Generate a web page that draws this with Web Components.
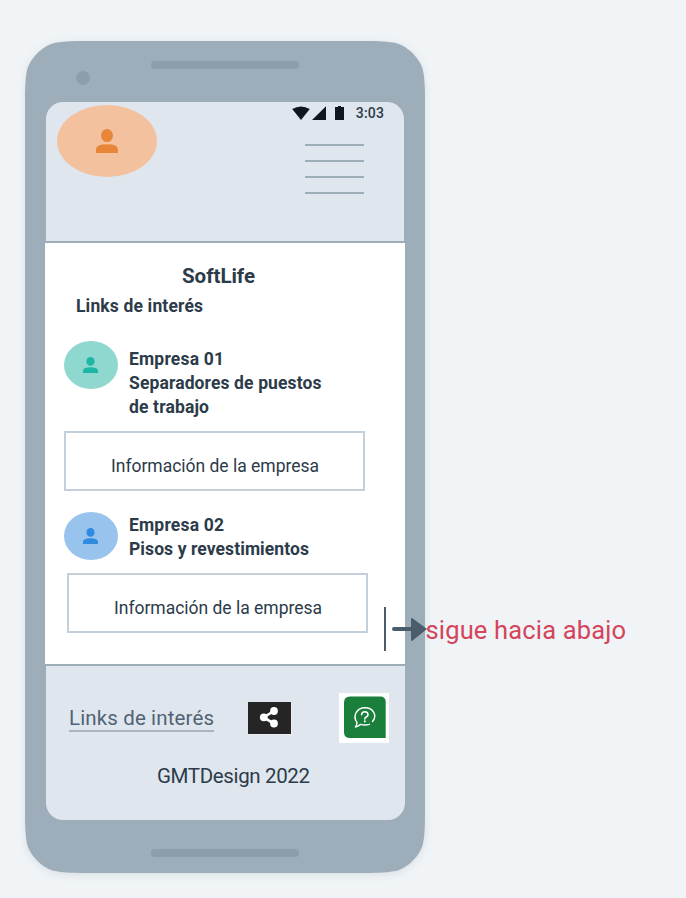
<!DOCTYPE html>
<html lang="es"><head><meta charset="utf-8"><title>SoftLife</title>
<style>body{margin:0;background:#f0f4f7;font-family:Roboto,"Liberation Sans",sans-serif;color:#2c3b49}</style></head>
<body><soft-page></soft-page>
<script>
class Base extends HTMLElement{
  constructor(){super();this.attachShadow({mode:'open'}).innerHTML=this.view();}
  view(){return '';}
}
// Single line of text whose tracking is set so that it fills a given width
class FitText extends Base{
  view(){return `<style>:host{display:block;white-space:nowrap}span{display:inline-block}</style><span><slot></slot></span>`;}
  connectedCallback(){
    const s=this.shadowRoot.querySelector('span'),w=+this.getAttribute('w'),n=this.textContent.length;
    s.style.letterSpacing=((w-s.getBoundingClientRect().width)/(n-1))+'px';
  }
}
class UserAvatar extends Base{
  view(){return `<style>:host{display:flex;flex:none;box-sizing:border-box;align-items:center;justify-content:center;border-radius:50%;padding-right:var(--shift,1px)}svg{display:block;width:var(--iw,15px);height:var(--ih,16px);fill:currentColor}</style>
  <svg viewBox="0 0 22 24" preserveAspectRatio="none"><ellipse cx="11" cy="6.6" rx="6" ry="6.5"/><path d="M0 24V20.5Q0 15.2 11 15.2T22 20.5V24Z"/></svg>`;}
}
class StatusBar extends Base{
  view(){return `<style>:host{display:flex;align-items:flex-start;justify-content:flex-end;height:22px;font-size:14px;font-weight:500;line-height:22px}svg{display:block;margin-top:4px;fill:#0f161e}fit-text{margin-left:11px}</style>
  <svg width="54" height="15" viewBox="0 0 54 15"><path d="M1.2 3Q10 -2.2 18.8 3L10 14ZM21 14L35 .3V14ZM44 1H47V0H50V1H53V14H44Z"/></svg><fit-text w="28">3:03</fit-text>`;}
}
class MenuLines extends Base{
  view(){return `<style>:host{display:flex;flex-direction:column;gap:14px;width:59px}i{height:2px;background:#9eadba}</style><i></i><i></i><i></i><i></i>`;}
}
class AppHeader extends Base{
  view(){return `<style>:host{display:block;box-sizing:border-box;height:141px;margin:0 1px;border-bottom:2px solid #9eadba;background:#dfe6ee;border-radius:17px 17px 0 0}
  .row{display:flex;justify-content:space-between;align-items:flex-start;padding:3px 20px 0 11px}
  user-avatar{width:100px;height:72px;background:#f4c19f;color:#e98538;--iw:22px;--ih:24px;--shift:0px}
  .right{display:flex;flex-direction:column;align-items:flex-end;margin-top:-3px}menu-lines{margin:20px 20px 0 0}</style>
  <div class="row"><user-avatar></user-avatar><div class="right"><status-bar></status-bar><menu-lines></menu-lines></div></div>`;}
}
class CompanyRow extends Base{
  view(){return `<style>:host{display:flex;align-items:flex-start;gap:11px;margin-left:19px}user-avatar{width:54px;height:48px;background:var(--bg);color:var(--fg)}.t{padding-top:var(--top);font-weight:700;font-size:17.5px;line-height:24px}</style>
  <user-avatar></user-avatar><div class="t"><slot></slot></div>`;}
}
class InfoBox extends Base{
  view(){return `<style>:host{display:block;box-sizing:border-box;width:301px;height:60px;border:2px solid #c3d0db;padding:21px 0 0 45px;font-size:17.5px;line-height:24px}</style><fit-text w="208">Información de la empresa</fit-text>`;}
}
class AppMain extends Base{
  view(){return `<style>:host{display:block;box-sizing:border-box;height:421px;background:#fff;padding-top:21px}
  h1,h2{margin:0;line-height:24px}h1{font-size:20.5px;padding-left:137px}h2{font-size:17.5px;margin-top:6px;padding-left:31px}
  .a{margin-top:23px;--bg:#8fd8cf;--fg:#1fb5a5;--top:6px}.b{margin-top:21px;--bg:#98c3ed;--fg:#2e8be0;--top:1px}
  .ia{margin:12px 0 0 19px}.ib{margin:12px 0 0 22px}</style>
  <h1><fit-text w="73">SoftLife</fit-text></h1><h2><fit-text w="127">Links de interés</fit-text></h2>
  <company-row class="a"><fit-text w="95">Empresa 01</fit-text><fit-text w="192.500">Separadores de puestos</fit-text><fit-text w="80">de trabajo</fit-text></company-row>
  <info-box class="ia"></info-box>
  <company-row class="b"><fit-text w="95">Empresa 02</fit-text><fit-text w="180">Pisos y revestimientos</fit-text></company-row>
  <info-box class="ib"></info-box>`;}
}
class ShareButton extends Base{
  view(){return `<style>:host{display:block;width:43px;height:32px;background:#252525;box-shadow:1px 1px #eceeef}svg{display:block}</style>
  <svg width="43" height="32" viewBox="0 0 43 32"><path d="M26 9L15.5 15.5L26 21.5" fill="none" stroke="#fff" stroke-width="2.6"/><circle cx="15.8" cy="15.3" r="3.9" fill="#fff"/><circle cx="26" cy="9" r="3.9" fill="#fff"/><circle cx="26" cy="21.5" r="3.9" fill="#fff"/></svg>`;}
}
class HelpButton extends Base{
  view(){return `<style>:host{display:block;width:50px;height:50px;background:#fff}svg{display:block}</style>
  <svg width="50" height="50" viewBox="0 0 50 50"><path d="M11 3.5H41Q46.7 3.5 46.7 9V45H11Q5 45 5 39V9.5Q5 3.5 11 3.5Z" fill="#1a7f3a"/>
  <g fill="none" stroke="#fff" stroke-width="1.4" stroke-linecap="round" stroke-linejoin="round"><path d="M30.5 31.3Q26 32.7 21.5 31.4Q19 33.6 16.5 34Q18 31.7 18 29.5Q14.4 24.5 17.2 19.5Q20.3 14.7 26 14.8Q32.3 14.8 34.8 19.5Q37.2 24 33.5 28.5"/><path stroke-width="1.6" d="M22.6 21.8Q22.7 18.7 25.8 18.7Q29 18.8 29 21.7Q29 23 27.2 24Q25.8 24.8 25.8 26"/><path d="M25.8 28.3V28.5" stroke-width="1.9"/></g></svg>`;}
}
class AppFooter extends Base{
  view(){return `<style>:host{display:block;box-sizing:border-box;height:156px;margin-left:1px;border-top:2px solid #9eadba;background:#dfe6ee;border-radius:0 0 17px 17px;line-height:24px;font-size:20.5px}
  .row{display:flex;align-items:flex-start;padding:27px 0 0 23px}
  .link{box-sizing:border-box;width:145px;height:26px;margin-top:13px;border-bottom:2px solid #a9b5c1;color:#516375}
  share-button{margin:9px 48px 0 34px}.credit{padding-left:111px;margin-top:21px}</style>
  <div class="row"><fit-text class="link" w="145">Links de interés</fit-text><share-button></share-button><help-button></help-button></div>
  <fit-text class="credit" w="153">GMTDesign 2022</fit-text>`;}
}
class PhoneFrame extends Base{
  view(){return `<style>:host{display:block;position:relative;box-sizing:border-box;width:400px;height:832px;padding:61px 20px 0}
  .shell{position:absolute;inset:0;z-index:-1;overflow:visible;filter:drop-shadow(0 2px 4px rgba(60,80,100,.12))}</style>
  <svg class="shell" width="400" height="832" viewBox="0 0 400 832"><path fill="#9eadba" d="M0 60C0 46 .5 36 2.200 28.500C5 17.500 17.500 5 28.500 2.200C36 .5 46 0 60 0H340C354 0 364 .5 371.500 2.200C382.500 5 395 17.500 397.800 28.500C399.500 36 400 46 400 60V772C400 786 399.500 796 397.800 803.500C395 814.500 382.500 827 371.500 829.800C364 831.500 354 832 340 832H60C46 832 36 831.500 28.500 829.800C17.500 827 5 814.500 2.200 803.500C.5 796 0 786 0 772Z"/>
  <g fill="#8e9dac"><rect x="126" y="20" width="148" height="8" rx="4"/><rect x="126" y="808" width="148" height="8" rx="4"/><circle cx="58" cy="37" r="7"/></g></svg>
  <slot></slot>`;}
}
// Scroll note laid over the edge of the phone
class ScrollNote extends Base{
  view(){return `<style>:host{position:absolute;left:384px;top:607px;display:flex;align-items:flex-start;color:#d4445b;font-size:25.5px;line-height:30px}svg{flex:none;display:block}fit-text{margin:8px 0 0 -1.5px}</style>
  <svg width="43" height="44" viewBox="0 0 43 44"><path fill="#4b5c6b" d="M0 0H2V44H0ZM28 11L43 22L28 34Q27 34 27 33V12Q27 11 28 11Z"/><path stroke="#4b5c6b" stroke-width="4" stroke-linecap="round" d="M10 22H28"/></svg><fit-text w="200.500">sigue hacia abajo</fit-text>`;}
}
class SoftPage extends Base{
  view(){return `<style>:host{display:block;position:relative;z-index:0;box-sizing:border-box;height:898px;padding:41px 0 0 25px;overflow:hidden}</style>
  <phone-frame><app-header></app-header><app-main></app-main><app-footer></app-footer></phone-frame><scroll-note></scroll-note>`;}
}
for(const [n,c] of Object.entries({'fit-text':FitText,'user-avatar':UserAvatar,'status-bar':StatusBar,'menu-lines':MenuLines,'app-header':AppHeader,'company-row':CompanyRow,'info-box':InfoBox,'app-main':AppMain,'share-button':ShareButton,'help-button':HelpButton,'app-footer':AppFooter,'phone-frame':PhoneFrame,'scroll-note':ScrollNote,'soft-page':SoftPage}))customElements.define(n,c);
</script></body></html>
